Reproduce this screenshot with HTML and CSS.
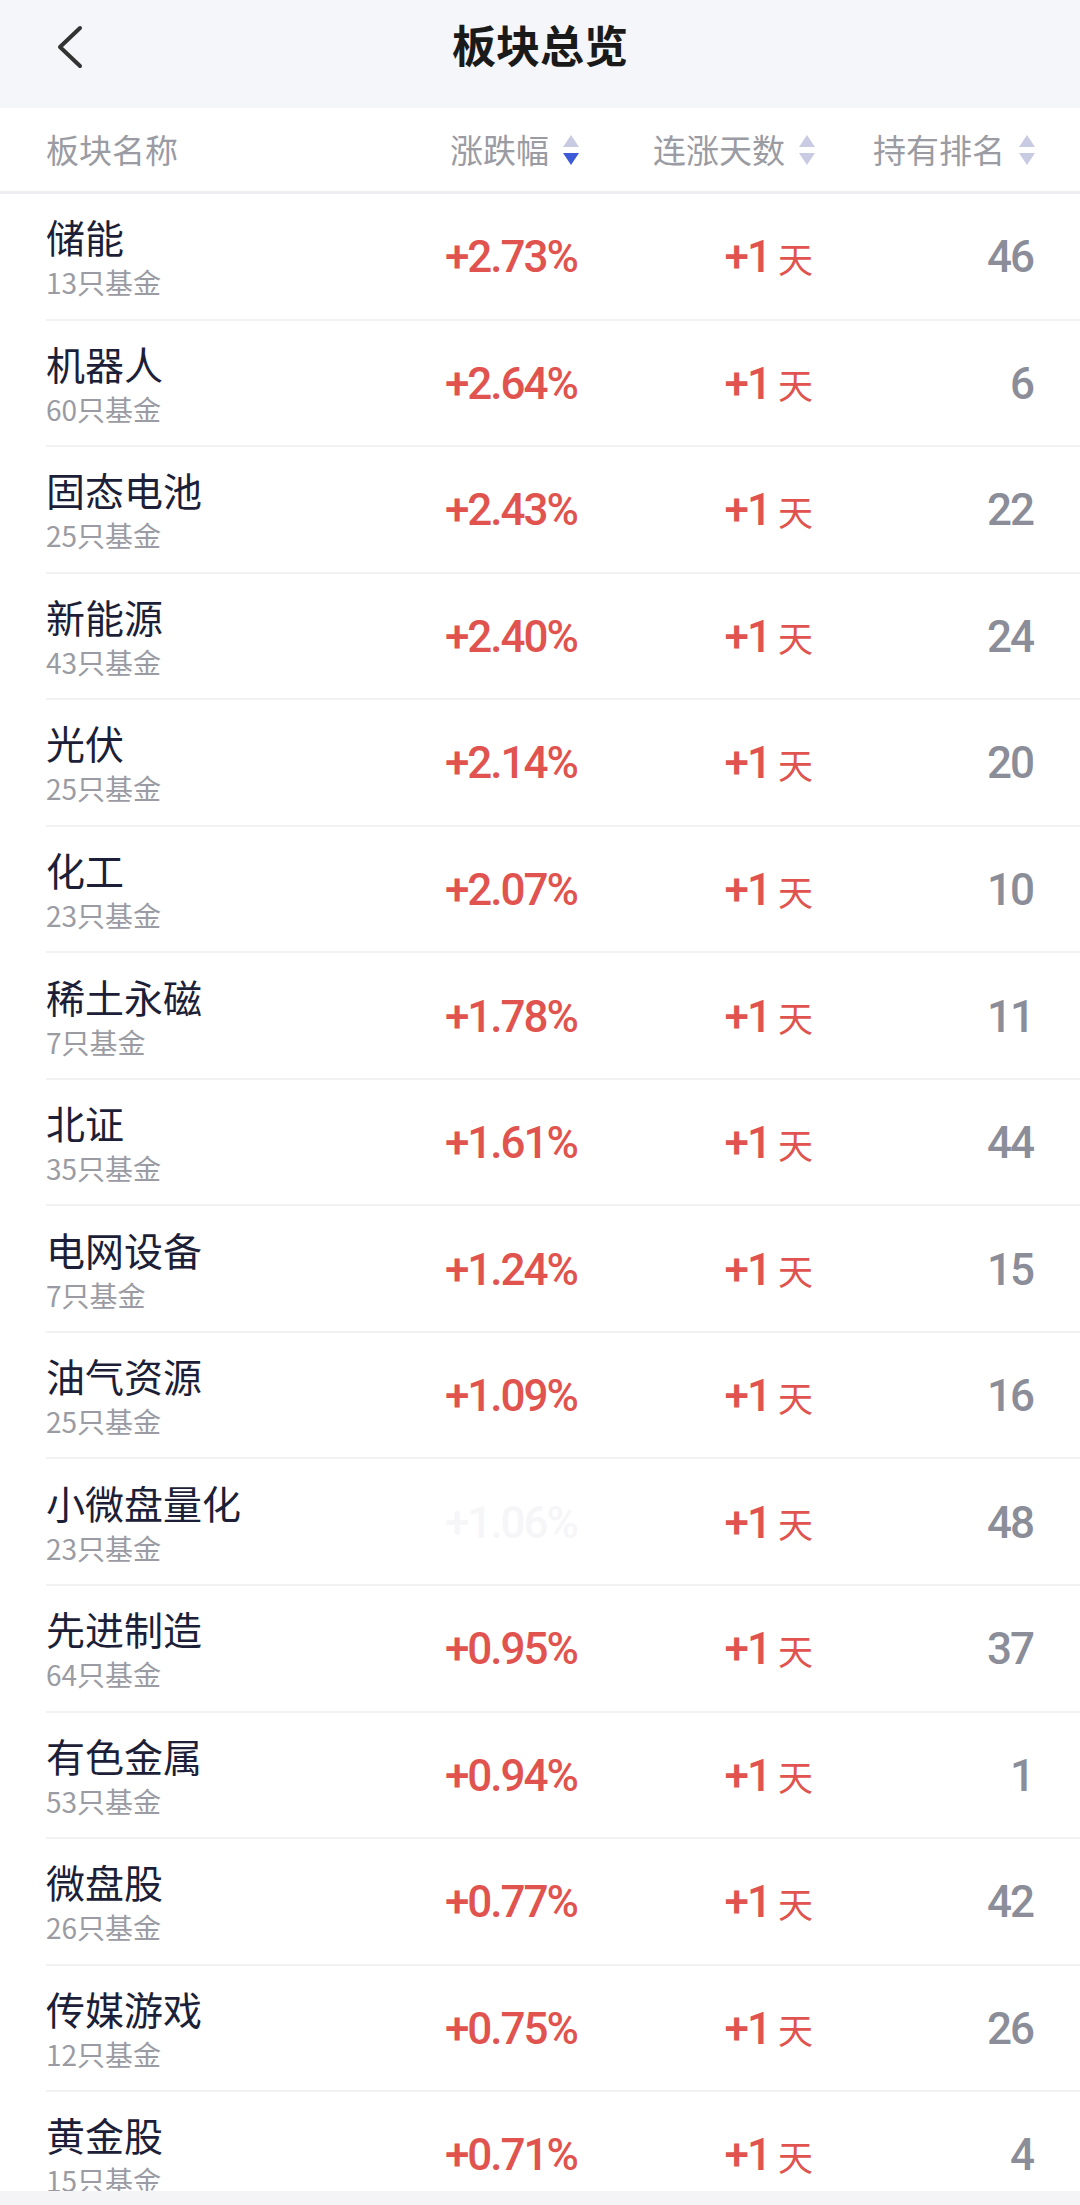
FILE: index.html
```html
<!DOCTYPE html>
<html lang="zh-CN">
<head>
    <meta charset="UTF-8">
    <meta name="viewport" content="width=device-width, initial-scale=1.0">
    <title>板块总览</title>
    <link rel="stylesheet" href="styles.css">
</head>
<body>
    <div class="page">
        <div class="topbar">
            <div class="back">
                <svg width="30" height="46" viewBox="0 0 30 46">
                    <polyline points="24,4 4,23 24,42" fill="none" stroke="#333" stroke-width="4" stroke-linecap="round" stroke-linejoin="round"/>
                </svg>
            </div>
            <h1>板块总览</h1>
            <div></div>
        </div>

        <div class="table-head">
            <div class="th th-name">板块名称</div>
            <div class="th">涨跌幅<span class="sort"><i class="up"></i><i class="down active"></i></span></div>
            <div class="th">连涨天数<span class="sort"><i class="up"></i><i class="down"></i></span></div>
            <div class="th">持有排名<span class="sort"><i class="up"></i><i class="down"></i></span></div>
        </div>

        <div id="list" class="list"></div>

        <div class="bottom-bar"></div>
    </div>
    <script>
        document.addEventListener("DOMContentLoaded", function () {
            const list = document.getElementById("list");

            // 板块数据
            const sectors = [
                { name: "储能", funds: 13, change: "+2.73%", days: 1, rank: 46 },
                { name: "机器人", funds: 60, change: "+2.64%", days: 1, rank: 6 },
                { name: "固态电池", funds: 25, change: "+2.43%", days: 1, rank: 22 },
                { name: "新能源", funds: 43, change: "+2.40%", days: 1, rank: 24 },
                { name: "光伏", funds: 25, change: "+2.14%", days: 1, rank: 20 },
                { name: "化工", funds: 23, change: "+2.07%", days: 1, rank: 10 },
                { name: "稀土永磁", funds: 7, change: "+1.78%", days: 1, rank: 11 },
                { name: "北证", funds: 35, change: "+1.61%", days: 1, rank: 44 },
                { name: "电网设备", funds: 7, change: "+1.24%", days: 1, rank: 15 },
                { name: "油气资源", funds: 25, change: "+1.09%", days: 1, rank: 16 },
                { name: "小微盘量化", funds: 23, change: "+1.06%", days: 1, rank: 48, faded: true },
                { name: "先进制造", funds: 64, change: "+0.95%", days: 1, rank: 37 },
                { name: "有色金属", funds: 53, change: "+0.94%", days: 1, rank: 1 },
                { name: "微盘股", funds: 26, change: "+0.77%", days: 1, rank: 42 },
                { name: "传媒游戏", funds: 12, change: "+0.75%", days: 1, rank: 26 },
                { name: "黄金股", funds: 15, change: "+0.71%", days: 1, rank: 4 }
            ];

            sectors.forEach(item => {
                const row = document.createElement("div");
                row.classList.add("row");
                row.innerHTML = `
                    <div class="name-cell">
                        <div class="name">${item.name}</div>
                        <div class="funds">${item.funds}只基金</div>
                    </div>
                    <div class="num change${item.faded ? " faded" : ""}">${item.change}</div>
                    <div class="num days">+${item.days}<span class="day-unit">天</span></div>
                    <div class="num rank">${item.rank}</div>
                `;
                list.appendChild(row);
            });
        });
    </script>
</body>
</html>
```

FILE: styles.css
```css
body {
    margin: 0;
    padding: 0;
    background-color: #fff;
    font-family: "Noto Sans CJK SC", "Noto Sans", sans-serif;
}

.page {
    width: 1080px;
    height: 2205px;
    overflow: hidden;
    position: relative;
}

.topbar {
    height: 108px;
    background-color: #f5f6f9;
    display: grid;
    grid-template-columns: 1fr auto 1fr;
    align-items: center;
}

.back {
    padding-left: 56px;
    padding-bottom: 14px;
    display: flex;
    align-items: center;
}

.topbar h1 {
    margin: 0 0 20px;
    font-size: 44px;
    font-weight: bold;
    color: #1a1a1a;
    line-height: 1;
}

.table-head {
    height: 83px;
    border-bottom: 3px solid #eeeef2;
    display: grid;
    grid-template-columns: 1fr 190px 236px 220px;
    align-items: center;
    padding: 0 45px 0 46px;
}

.th {
    display: flex;
    align-items: center;
    justify-content: flex-end;
    font-size: 33px;
    color: #9a9ba3;
    line-height: 1;
}

.th-name {
    justify-content: flex-start;
}

.sort {
    display: flex;
    flex-direction: column;
    gap: 6px;
    margin-left: 14px;
}

.sort i {
    display: block;
    width: 0;
    height: 0;
    border-left: 8px solid transparent;
    border-right: 8px solid transparent;
}

.sort .up {
    border-bottom: 12px solid #c9cbe3;
}

.sort .down {
    border-top: 12px solid #c9cbe3;
}

.sort .down.active {
    border-top-color: #3d5bd6;
}

.list {
    padding-left: 46px;
}

.row {
    height: 126.56px;
    box-sizing: border-box;
    border-bottom: 2px solid #f2f2f5;
    display: grid;
    grid-template-columns: 1fr 190px 236px 220px;
    align-items: center;
    padding-right: 47px;
}

.name-cell {
    display: flex;
    flex-direction: column;
    padding-top: 2px;
}

.name {
    font-size: 39px;
    line-height: 48px;
    color: #1c1f37;
}

.funds {
    margin-top: 2px;
    font-size: 28px;
    line-height: 40px;
    color: #9a9ba3;
}

.num {
    display: flex;
    align-items: center;
    justify-content: flex-end;
    font-family: Roboto, "Liberation Sans", sans-serif;
    font-size: 44px;
    font-weight: 500;
    letter-spacing: -2px;
    line-height: 1;
    padding-top: 2px;
}

.change,
.days {
    color: #e0534e;
}

.change.faded {
    color: #f6f6f8;
}

.day-unit {
    font-family: "Noto Sans CJK SC", sans-serif;
    font-size: 35px;
    font-weight: 400;
    margin-left: 8px;
    letter-spacing: 0;
}

.rank {
    color: #8b8d98;
}

.bottom-bar {
    position: absolute;
    left: 0;
    right: 0;
    bottom: 0;
    height: 14px;
    background-color: #f4f4f6;
}
```
